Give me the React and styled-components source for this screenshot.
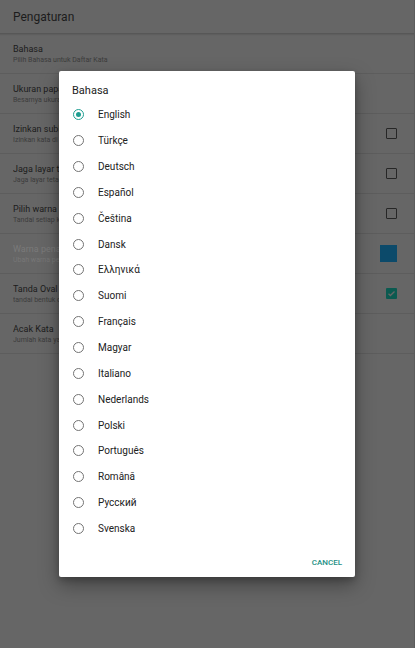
import React from "react";
import styled, { createGlobalStyle } from "styled-components";

const Global = createGlobalStyle`
  html, body { margin: 0; padding: 0; background: #666666; }
  body { font-family: Roboto, "Noto Sans", "Liberation Sans", sans-serif; }
  * { box-sizing: border-box; }
`;

const Page = styled.div`
  position: relative;
  width: 415px;
  height: 648px;
  background: #666666;
  overflow: hidden;
  border-right: 1px solid #5c5c5c;
`;

const Header = styled.div`
  height: 34px;
  display: flex;
  align-items: center;
  padding-left: 13px;
  border-bottom: 1px solid #575757;
  box-shadow: 0 1px 1px rgba(0, 0, 0, 0.08);
  font-size: 12px;
  color: #1c1c1c;
`;

const Row = styled.div`
  height: 40px;
  display: flex;
  align-items: center;
  justify-content: space-between;
  padding: 0 17px 0 13px;
  border-bottom: 1px solid #5d5d5d;
`;

const RowText = styled.div`
  display: flex;
  flex-direction: column;
  gap: 1px;
  padding-top: 1px;
  white-space: nowrap;
  overflow: hidden;
  max-width: ${(p) => (p.$clip ? "46px" : "none")};
`;

const RowTitle = styled.div`
  font-size: 9px;
  line-height: 11px;
  color: ${(p) => (p.$disabled ? "#7a7a7a" : "#1c1c1c")};
`;

const RowSub = styled.div`
  font-size: 7px;
  line-height: 9px;
  color: ${(p) => (p.$disabled ? "#777777" : "#3c3c3c")};
`;

const Box = styled.div`
  width: 11px;
  height: 11px;
  border: 1.5px solid #262626;
  border-radius: 1px;
`;

const CheckedBox = styled.div`
  width: 11px;
  height: 11px;
  border-radius: 1px;
  background: #0b5a50;
  display: flex;
  align-items: center;
  justify-content: center;
`;

const Swatch = styled.div`
  width: 17px;
  height: 17px;
  background: #0c4a6a;
`;

const Scrim = styled.div`
  position: absolute;
  inset: 0;
  display: flex;
  align-items: center;
  justify-content: center;
`;

const Dialog = styled.div`
  width: 296px;
  height: 506px;
  background: #ffffff;
  border-radius: 2px;
  box-shadow: 0 8px 20px rgba(0, 0, 0, 0.35), 0 3px 6px rgba(0, 0, 0, 0.2);
  display: flex;
  flex-direction: column;
  padding-top: 13px;
`;

const Title = styled.div`
  font-size: 11px;
  line-height: 14px;
  color: #212121;
  padding-left: 13px;
  margin-bottom: 4px;
`;

const List = styled.div`
  display: flex;
  flex-direction: column;
`;

const Option = styled.div`
  height: 25.85px;
  display: flex;
  align-items: center;
  padding-left: 14px;
  gap: 14px;
`;

const Radio = styled.div`
  width: 11px;
  height: 11px;
  border-radius: 50%;
  border: 1.5px solid ${(p) => (p.$on ? "#1e9e91" : "#737373")};
  display: flex;
  align-items: center;
  justify-content: center;
  flex: none;
  &::after {
    content: "";
    display: ${(p) => (p.$on ? "block" : "none")};
    width: 5px;
    height: 5px;
    border-radius: 50%;
    background: #1e9e91;
  }
`;

const Label = styled.div`
  font-size: 10px;
  color: #212121;
`;

const Actions = styled.div`
  margin-top: auto;
  display: flex;
  justify-content: flex-end;
  padding: 0 13px 3px 0;
`;

const TextButton = styled.div`
  height: 24px;
  display: flex;
  align-items: center;
  font-size: 8px;
  font-weight: 500;
  letter-spacing: 0;
  color: #1b8f84;
`;

const rows = [
  { t: "Bahasa", s: "Pilih Bahasa untuk Daftar Kata", w: null },
  { t: "Ukuran papan", s: "Besarnya ukuran papan permainan", w: null, c: true },
  { t: "Izinkan subkata", s: "Izinkan kata di dalam kata lain", w: "box", c: true },
  { t: "Jaga layar tetap menyala", s: "Jaga layar tetap menyala saat bermain", w: "box", c: true },
  { t: "Pilih warna", s: "Tandai setiap kata dengan warna berbeda", w: "box", c: true },
  { t: "Warna penanda", s: "Ubah warna penanda kata", w: "swatch", d: true, c: true },
  { t: "Tanda Oval", s: "tandai bentuk oval pada kata", w: "checked", c: true },
  { t: "Acak Kata", s: "Jumlah kata yang diacak", w: null, c: true },
];

const langs = [
  "English",
  "Türkçe",
  "Deutsch",
  "Español",
  "Čeština",
  "Dansk",
  "Ελληνικά",
  "Suomi",
  "Français",
  "Magyar",
  "Italiano",
  "Nederlands",
  "Polski",
  "Português",
  "Română",
  "Русский",
  "Svenska",
];

function Widget({ w }) {
  if (w === "box") return <Box />;
  if (w === "swatch") return <Swatch />;
  if (w === "checked")
    return (
      <CheckedBox>
        <svg width="9" height="9" viewBox="0 0 24 24">
          <path d="M4 12.5l5 5L20 6.5" fill="none" stroke="#666" strokeWidth="3.5" />
        </svg>
      </CheckedBox>
    );
  return null;
}

export default function App() {
  return (
    <Page>
      <Global />
      <Header>Pengaturan</Header>
      {rows.map((r) => (
        <Row key={r.t}>
          <RowText $clip={r.c}>
            <RowTitle $disabled={r.d}>{r.t}</RowTitle>
            <RowSub $disabled={r.d}>{r.s}</RowSub>
          </RowText>
          <Widget w={r.w} />
        </Row>
      ))}
      <Scrim>
        <Dialog>
          <Title>Bahasa</Title>
          <List>
            {langs.map((l, i) => (
              <Option key={l}>
                <Radio $on={i === 0} />
                <Label>{l}</Label>
              </Option>
            ))}
          </List>
          <Actions>
            <TextButton>CANCEL</TextButton>
          </Actions>
        </Dialog>
      </Scrim>
    </Page>
  );
}
